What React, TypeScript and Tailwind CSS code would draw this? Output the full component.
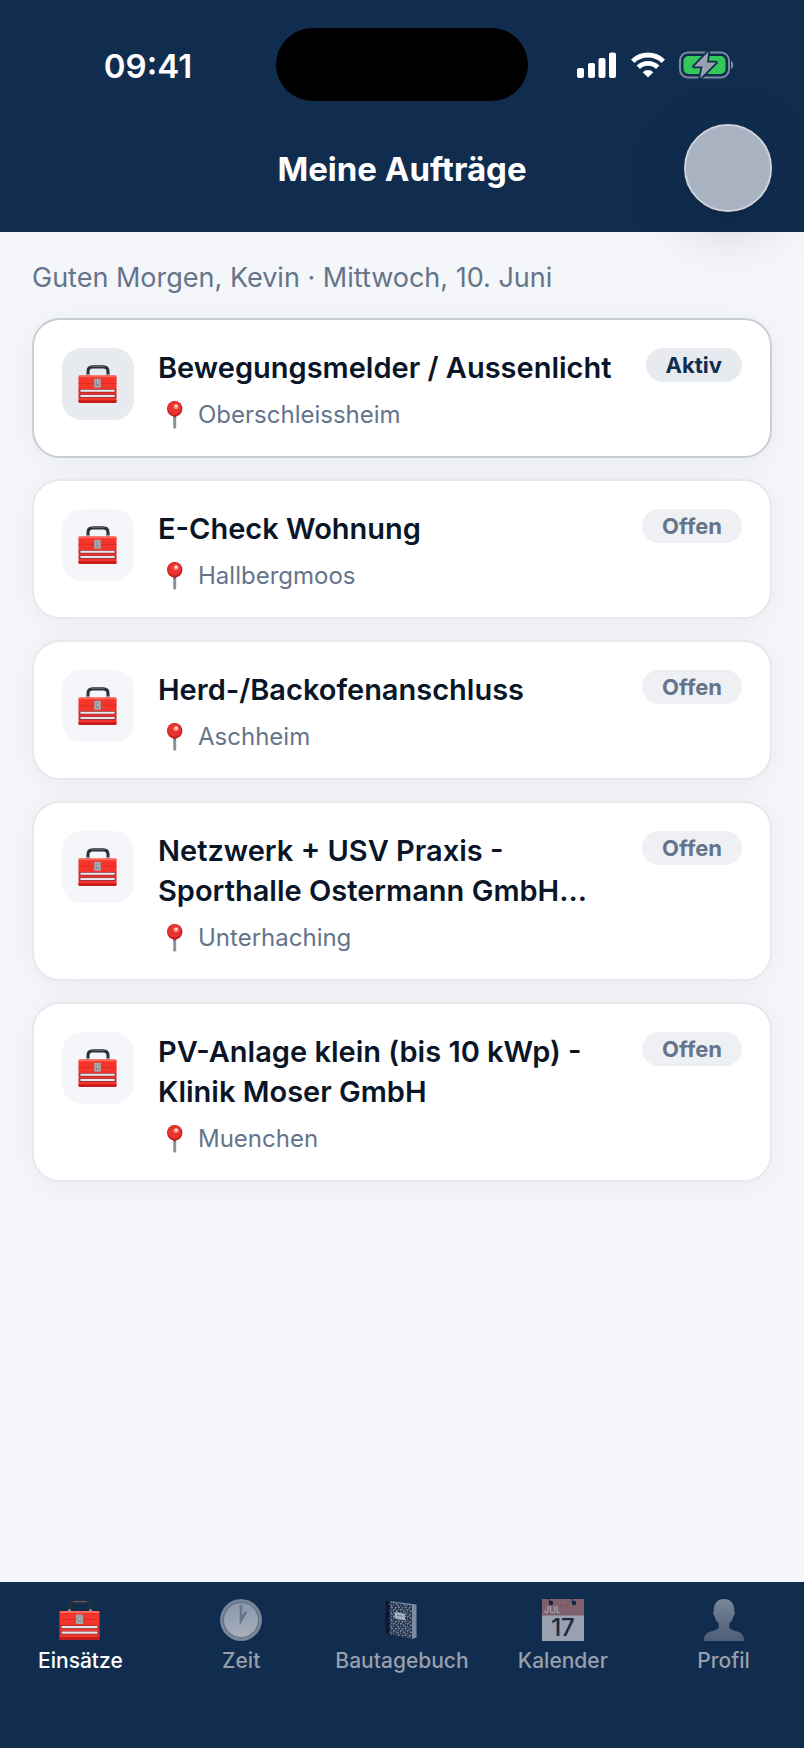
import type { ReactNode } from "react";

type Job = {
  title: string;
  city: string;
  active?: boolean;
};

const jobs: Job[] = [
  { title: "Bewegungsmelder / Aussenlicht", city: "Oberschleissheim", active: true },
  { title: "E-Check Wohnung", city: "Hallbergmoos" },
  { title: "Herd-/Backofenanschluss", city: "Aschheim" },
  { title: "Netzwerk + USV Praxis - Sporthalle Ostermann GmbH...", city: "Unterhaching" },
  { title: "PV-Anlage klein (bis 10 kWp) - Klinik Moser GmbH", city: "Muenchen" },
];

const ToolboxIcon = ({ className }: { className: string }) => (
  <svg viewBox="0 0 42 42" className={className} aria-hidden="true">
    <path
      d="M10.500 12V8q0-5 5-5h11q5 0 5 5v4"
      fill="none"
      stroke="#2b303e"
      strokeWidth="3.2"
      strokeLinejoin="round"
    />
    <path d="M14 2.600h14" stroke="#6a5f69" strokeWidth="1" />
    <path d="M9 10.500h3V12H9zM30 10.500h3V12h-3z" fill="#9a9ca4" />
    <rect x="0.500" y="12" width="40" height="29" rx="1.5" fill="#f5352b" />
    <path d="M.500 13.500A1.500 1.500 0 0 1 2 12h37a1.500 1.500 0 0 1 1.500 1.500V14H.500z" fill="#fb6a5c" />
    <path d="M.500 20.500h40" stroke="#d62b24" strokeWidth="0.8" />
    <rect x="1.500" y="26.5" width="38" height="3.4" fill="#7d2830" />
    <rect x="2.500" y="27" width="36" height="2.200" fill="#e8e4ec" />
    <rect x="1.500" y="32" width="38" height="3.4" fill="#7d2830" />
    <rect x="2.500" y="32.500" width="36" height="2.200" fill="#e8e4ec" />
    <path d="M.500 38h40v1.500A1.500 1.500 0 0 1 39 41H2a1.500 1.500 0 0 1-1.500-1.500z" fill="#c41d1c" />
    <rect x="17" y="15.500" width="7" height="9.5" rx="0.8" fill="#a3a5ab" />
    <path d="M19 18h3v4.500h-3z" fill="#85888f" />
    <path d="M20 18.500h1.500v2.500h-1.500z" fill="#c9cbd0" />
  </svg>
);

const PinIcon = () => (
  <svg viewBox="0 0 32 32" className="size-8 shrink-0" aria-hidden="true">
    <path d="M15.200 14h3v14.500l-1.500 1.500-1.500-1.500z" fill="#8b93a0" />
    <path d="M15.200 15h3v3.500h-3z" fill="#6b5560" />
    <circle cx="16.700" cy="9.700" r="7.700" fill="#c81d1f" />
    <circle cx="16.500" cy="9" r="6.700" fill="#e8332e" />
    <circle cx="18" cy="7.500" r="2.600" fill="#f98a7e" />
    <circle cx="18.200" cy="7" r="1.200" fill="#fff" opacity="0.8" />
  </svg>
);

const ClockIcon = () => (
  <svg viewBox="0 0 42 42" className="size-[42px]" aria-hidden="true">
    <defs>
      <linearGradient id="clock-face" x1="0" y1="0" x2="0" y2="1">
        <stop offset="0" stopColor="#8a98ac" />
        <stop offset="1" stopColor="#a7aeb9" />
      </linearGradient>
    </defs>
    <circle cx="21" cy="21" r="21" fill="#66748a" />
    <circle cx="21" cy="21" r="19.500" fill="none" stroke="#7c899c" strokeWidth="2" />
    <circle cx="21" cy="21" r="17" fill="url(#clock-face)" />
    <path d="M21 7v14.500l4.500-8" fill="none" stroke="#65758b" strokeWidth="2.600" strokeLinecap="round" />
  </svg>
);

const NotebookIcon = () => (
  <svg viewBox="0 0 42 42" className="size-[42px]" aria-hidden="true">
    <defs>
      <pattern id="marble" width="7" height="7" patternUnits="userSpaceOnUse">
        <rect width="7" height="7" fill="#2c3c56" />
        <path
          d="M0 1h2v1H1v1H0zM3 0h1v1h1v1H3zM5 3h2v1H6v1H5zM1 4h1v1h1v1H1zM3 3h1v1H3zM5 6h1v1H5zM3 6h1v1H3z"
          fill="#6f7e95"
        />
      </pattern>
    </defs>
    <path d="M4.500 2 31 4.500l5.500 1v33L30 41 5 35z" fill="#1f2e48" />
    <path d="M9 2l22 3 4.500.500v33L31 40z" fill="#7d8ba0" />
    <path d="M8.500 2.500 31 6.500v33L8.500 35z" fill="url(#marble)" />
    <path d="M4.500 1.500 8.500 2.500V35.500L4.500 34z" fill="#0c1930" />
    <path
      d="m14.500 13 8.500 1.500q1 .3 1 1.500v4.500q0 1-1 .8L14.500 19.500q-1-.2-1-1.200v-4.500q0-1 1-.8z"
      fill="#a4afbd"
    />
    <path d="m16 16.300 5.500 1" stroke="#66758a" strokeWidth="1" />
  </svg>
);

const CalendarIcon = () => (
  <svg viewBox="0 0 42 42" className="size-[42px] overflow-visible" aria-hidden="true">
    <rect width="42" height="42" fill="#98a1b0" />
    <rect width="42" height="16.500" fill="#80606c" />
    <circle cx="9" cy="4" r="2.200" fill="#0c2445" />
    <circle cx="32" cy="4" r="2.200" fill="#0c2445" />
    <path d="M9 4 6.500 0M32 4l-2.500-4" stroke="#0c2445" strokeWidth="1" />
    <circle cx="19.500" cy="7" r="0.700" fill="#8c2f3b" />
    <circle cx="25" cy="7" r="0.700" fill="#8c2f3b" />
    <text x="2" y="14" fontSize="9" fill="#a9aebb" className="font-['Inter',sans-serif]">
      JUL
    </text>
    <text
      x="21"
      y="37"
      fontSize="24"
      textAnchor="middle"
      fill="#1b2840"
      className="font-['Inter',sans-serif]"
    >
      17
    </text>
  </svg>
);

const PersonIcon = () => (
  <svg viewBox="0 0 42 42" className="size-[42px]" aria-hidden="true">
    <defs>
      <linearGradient id="bust" x1="0" y1="0" x2="0" y2="1">
        <stop offset="0" stopColor="#7a879a" />
        <stop offset="0.600" stopColor="#5d6c83" />
        <stop offset="1" stopColor="#4f5f78" />
      </linearGradient>
    </defs>
    <path
      d="M21 0c6.500 0 10.500 4.500 10.300 12 .9.500.9 3-.8 5.200-.8 3.300-2.300 5.800-4.300 7.600v3.400c1.500 3 5.300 3.300 8.800 4.500 3.700 1.400 6 4 6.500 9.300h-41C1 36.700 3.300 34.100 7 32.700c3.500-1.200 7.300-1.500 8.800-4.500v-3.400c-2-1.800-3.500-4.300-4.300-7.600-1.700-2.200-1.700-4.700-.8-5.200C10.500 4.500 14.500 0 21 0z"
      fill="url(#bust)"
    />
  </svg>
);

const SignalIcon = () => (
  <svg viewBox="0 0 40 26" className="h-[26px] w-10" fill="#fff" aria-hidden="true">
    <rect x="0" y="16" width="7" height="10" rx="2" />
    <rect x="11" y="11" width="7" height="15" rx="2" />
    <rect x="21.500" y="6" width="7" height="20" rx="2" />
    <rect x="32" y="0.500" width="7" height="25.500" rx="2" />
  </svg>
);

const WifiIcon = () => (
  <svg viewBox="0 0 34 26" className="h-[26px] w-[34px]" aria-hidden="true">
    <g fill="none" stroke="#fff" strokeWidth="4.800">
      <path d="M1.700 9.200a22 22 0 0 1 30.600 0" />
      <path d="M7.300 15.300a14 14 0 0 1 19.400 0" />
    </g>
    <path d="M17 25.500 11.700 20.200a7.800 7.800 0 0 1 10.600 0z" fill="#fff" />
  </svg>
);

const BatteryIcon = () => (
  <svg viewBox="0 0 56 28" className="h-7 w-14" aria-hidden="true">
    <rect x="1" y="1.500" width="49" height="25" rx="8" fill="none" stroke="#7f8a9c" strokeWidth="2" />
    <rect x="4.500" y="5" width="42" height="18" rx="5" fill="#34c759" />
    <path d="M52 10c3 1 3 7 0 8z" fill="#7f8a9c" />
    <path
      d="M29.500.5 15 15.500h8.500L21 27.500 37 11.500h-9z"
      fill="#98a1b0"
      stroke="#102d50"
      strokeWidth="3.600"
      strokeLinejoin="round"
      paintOrder="stroke"
    />
  </svg>
);

const JobCard = ({ title, city, active }: Job) => (
  <li
    className={`flex items-start gap-6 rounded-[28px] border-2 bg-white px-7 pt-7 pb-6 shadow-[0_4px_32px_rgba(15,23,42,0.05)] ${
      active ? "border-[#c8cdd6]" : "border-[#e5e8ed]"
    }`}
  >
    <div
      className={`flex size-[72px] shrink-0 items-center justify-center rounded-[20px] ${
        active ? "bg-[#e7eaee]" : "bg-[#f4f6fa]"
      }`}
    >
      <ToolboxIcon className="size-10" />
    </div>
    <div className="min-w-0 flex-1">
      <h2 className="text-[29px] leading-10 font-semibold text-[#0a1628]">{title}</h2>
      <p className="mt-[10px] flex items-center gap-2 text-2xl leading-[34px] text-[#64748b]">
        <PinIcon />
        {city}
      </p>
    </div>
    <span
      className={`shrink-0 rounded-full px-5 text-[22px] leading-[34px] font-bold ${
        active ? "bg-[#e7eaee] text-[#102d50]" : "bg-[#eff0f4] text-[#64748b]"
      }`}
    >
      {active ? "Aktiv" : "Offen"}
    </span>
  </li>
);

const tabs: { label: string; icon: ReactNode }[] = [
  { label: "Einsätze", icon: <ToolboxIcon className="size-[42px]" /> },
  { label: "Zeit", icon: <ClockIcon /> },
  { label: "Bautagebuch", icon: <NotebookIcon /> },
  { label: "Kalender", icon: <CalendarIcon /> },
  { label: "Profil", icon: <PersonIcon /> },
];

const App = () => {
  return (
    <div className="flex min-h-screen flex-col bg-[#f4f6fa] font-['Inter',sans-serif]">
      <header className="relative z-10 bg-[#102d50] pt-7 pb-5 text-white">
        <div className="grid grid-cols-[1fr_252px_1fr] items-center">
          <p className="pt-1 pl-5 text-center text-[33px] font-semibold">09:41</p>
          <div className="h-[73px] rounded-full bg-black" />
          <div className="flex items-center justify-center gap-[14px] pr-5">
            <SignalIcon />
            <WifiIcon />
            <BatteryIcon />
          </div>
        </div>
        <div className="mt-[23px] grid grid-cols-[1fr_auto_1fr] items-center px-8">
          <h1 className="col-start-2 pt-1 text-[33px] font-bold">Meine Aufträge</h1>
          <button
            type="button"
            aria-label="Konto"
            className="size-[88px] justify-self-end rounded-full border-2 border-[#ccd2db] bg-[#a9b2c1] shadow-[0_16px_64px_rgba(0,0,0,0.2)]"
          />
        </div>
      </header>

      <main className="flex-1 px-8 pt-[26px] pb-10">
        <p className="text-[27px] leading-10 text-[#64748b]">
          Guten Morgen, Kevin · Mittwoch, 10. Juni
        </p>
        <ul className="mt-5 flex flex-col gap-[21px]">
          {jobs.map((job) => (
            <JobCard key={job.title} {...job} />
          ))}
        </ul>
      </main>

      <nav className="grid grid-cols-5 bg-[#102d50] pt-[17px] pb-[73px]">
        {tabs.map(({ label, icon }, i) => (
          <a
            key={label}
            href="#"
            className={`flex flex-col items-center gap-[6px] text-[21px] leading-7 font-medium ${
              i === 0 ? "text-white" : "text-[#989fab]"
            }`}
          >
            {icon}
            {label}
          </a>
        ))}
      </nav>
    </div>
  );
};

export default App;
